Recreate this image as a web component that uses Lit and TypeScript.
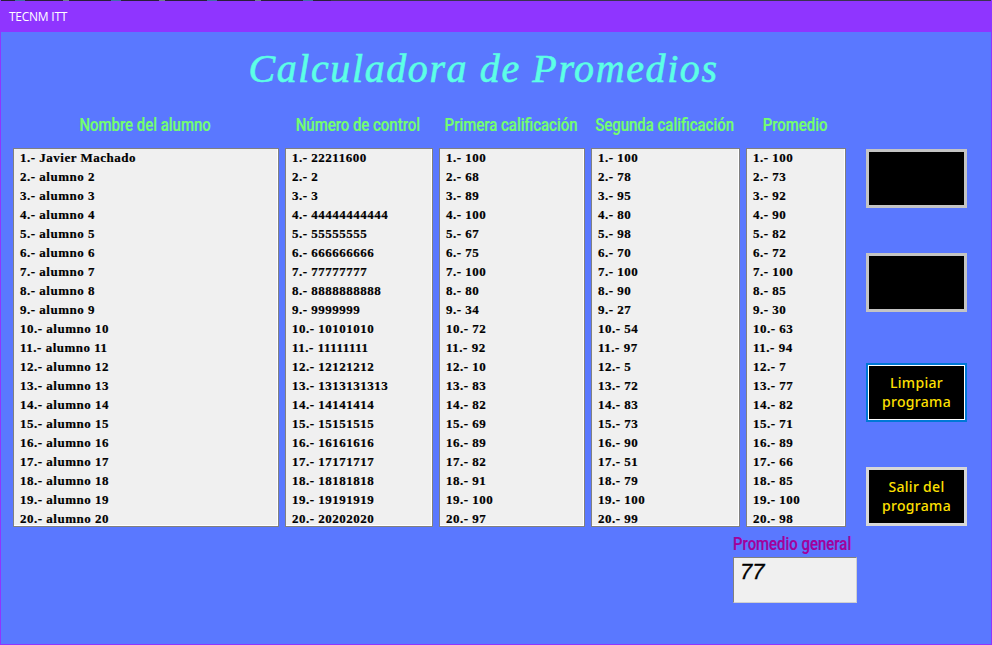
import { LitElement, html, css } from "lit";
import { customElement } from "lit/decorators.js";

const names = ["Javier Machado", ...Array.from({ length: 19 }, (_, i) => `alumno ${i + 2}`)];
const controls = ["22211600","2","3","44444444444","55555555","666666666","77777777","8888888888","9999999","10101010","11111111","12121212","1313131313","14141414","15151515","16161616","17171717","18181818","19191919","20202020"];
const first = [100,68,89,100,67,75,100,80,34,72,92,10,83,82,69,89,82,91,100,97];
const second = [100,78,95,80,98,70,100,90,27,54,97,5,72,83,73,90,51,79,100,99];
const avg = [100,73,92,90,82,72,100,85,30,63,94,7,77,82,71,89,66,85,100,98];

const columns: { title: string; cls: string; items: (string | number)[] }[] = [
  { title: "Nombre del alumno", cls: "c1", items: names },
  { title: "Número de control", cls: "c2", items: controls },
  { title: "Primera calificación", cls: "c3", items: first },
  { title: "Segunda calificación", cls: "c4", items: second },
  { title: "Promedio", cls: "c5", items: avg },
];

@customElement("app-root")
export class AppRoot extends LitElement {
  static styles = css`
    :host { display: block; width: 992px; height: 645px; overflow: hidden; }
    .window {
      box-sizing: border-box; width: 992px; height: 645px;
      display: flex; flex-direction: column;
      background: #5a78ff; border: 1px solid #8f35ff; border-top: 0;
    }
    .noise {
      height: 1px; flex: none;
      background: repeating-linear-gradient(90deg, #2a1f3a 0 14px, #3f6ea8 14px 24px, #2a1f3a 24px 62px, #6f7f90 62px 68px, #2a1f3a 68px 96px) no-repeat 0 0 / 330px 100%, #3a3350;
    }
    .titlebar {
      flex: none; height: 31px; background: #8f35ff; color: #fff;
      font: 12px/31px "Open Sans", "Noto Sans", sans-serif;
      letter-spacing: -.25px;
      padding-left: 8px;
    }
    h1 {
      margin: 13px 0 0; height: 48px; text-align: center; padding-right: 25px;
      font: italic 400 40px/48px "Liberation Serif", serif;
      letter-spacing: 1.6px; color: #5cffe6;
      -webkit-text-stroke: .6px #5cffe6;
    }
    .board { display: flex; gap: 6px; margin: 17px 0 0 12px; align-items: flex-start; }
    .col { display: flex; flex-direction: column; flex: none; }
    .c1 { width: 266px; } .c2 { width: 148px; } .c3 { width: 146px; }
    .c4 { width: 149px; } .c5 { width: 100px; }
    .head {
      height: 38px; display: flex; justify-content: center; white-space: nowrap;
      padding-right: 2px;
      font: 500 18px/29px Roboto, sans-serif;
      color: #74ff6e;
      -webkit-text-stroke: .2px #74ff6e;
    }
    .head span, .label span { display: inline-block; transform: scaleX(.83); }
    .list {
      box-sizing: border-box; height: 379px; overflow: hidden; background: #f0f0f0;
      border: 1px solid #808080;
      box-shadow: inset -1px -1px 0 #fff;
      padding: 0 5px 0 6px;
      font: 700 13px/19px "Liberation Serif", serif; color: #000; letter-spacing: .5px;
      -webkit-text-stroke: .2px #000;
    }
    .rows { margin-top: -1px; }
    .row { white-space: nowrap; height: 19px; }
    .actions {
      flex: none; width: 101px; margin: 39px 0 0 14px;
      display: flex; flex-direction: column;
    }
    .btn {
      box-sizing: border-box; width: 101px; height: 59px; padding: 0 0 2px;
      background: #000; border: 3px solid #c4c4c4; color: #ffe000;
      font: 500 14px/19px "Noto Sans", sans-serif; letter-spacing: .3px; text-align: center;
    }
    .b2 { margin-top: 45px; }
    .b3 { margin-top: 51px; border: 2px solid #0078d7; box-shadow: inset 0 0 0 1px #fff; }
    .b4 { margin-top: 45px; border-color: #d8d8d8; }
    .general { width: 124px; margin: 6px 0 0 732px; }
    .label {
      height: 24px; white-space: nowrap; display: flex;
      font: 500 18px/22px Roboto, sans-serif;
      color: #a3009b;
      -webkit-text-stroke: .2px #a3009b;
    }
    .label span { transform-origin: left center; }
    .box {
      box-sizing: border-box; width: 124px; height: 46px; background: #f0f0f0;
      border: 1px solid #808080; border-right-color: #d0d0d0; border-bottom-color: #d0d0d0;
      padding: 2px 0 0 6px;
      font: italic 400 22px/24px "Liberation Sans", sans-serif; color: #000;
      -webkit-text-stroke: .3px #000;
    }
  `;

  render() {
    return html`
      <div class="window">
        <div class="noise"></div>
        <div class="titlebar">TECNM ITT</div>
        <h1>Calculadora de Promedios</h1>
        <div class="board">
          ${columns.map(
            (c) => html`
              <div class="col ${c.cls}">
                <div class="head"><span>${c.title}</span></div>
                <div class="list">
                  <div class="rows">
                    ${c.items.map((v, i) => html`<div class="row">${i + 1}.- ${v}</div>`)}
                  </div>
                </div>
              </div>
            `
          )}
          <div class="actions">
            <button class="btn"></button>
            <button class="btn b2"></button>
            <button class="btn b3">Limpiar<br />programa</button>
            <button class="btn b4">Salir del<br />programa</button>
          </div>
        </div>
        <div class="general">
          <div class="label"><span>Promedio general</span></div>
          <div class="box">77</div>
        </div>
      </div>
    `;
  }
}
